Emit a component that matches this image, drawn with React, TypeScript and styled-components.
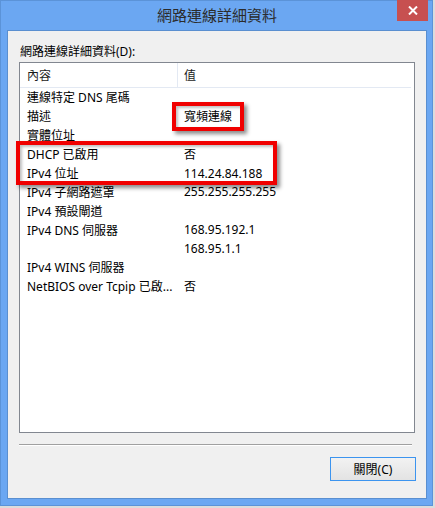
import React from "react";
import styled, { createGlobalStyle } from "styled-components";

const Global = createGlobalStyle`
  html, body { margin: 0; padding: 0; background: #dcdcdc; }
  body { font-family: "Noto Sans", "Noto Sans CJK TC", sans-serif; }
  * { box-sizing: border-box; }
`;

const Window = styled.div`
  position: relative;
  width: 433px;
  height: 506px;
  background: #6ba7f2;
  border: 1px solid #5b93d8;
  display: flex;
  flex-direction: column;
  padding: 0 5px 6px 6px;
`;

const TitleBar = styled.div`
  height: 29px;
  display: flex;
  align-items: center;
  justify-content: center;
  position: relative;
`;

const Title = styled.div`
  font-family: "Noto Sans CJK TC", sans-serif;
  font-size: 15px;
  color: #2b2b2b;
  margin-top: -2px;
`;

const CloseBtn = styled.div`
  position: absolute;
  right: -1px;
  top: -1px;
  width: 31px;
  height: 21px;
  background: #c75050;
  color: #fff;
  display: flex;
  align-items: center;
  justify-content: center;
`;

const Client = styled.div`
  flex: 1;
  background: #f0f0f0;
  border: 1px solid #5a8fd0;
  display: flex;
  flex-direction: column;
  padding: 0 12px 0 11px;
`;

const Label = styled.div`
  font-family: "Noto Sans", "Noto Sans CJK TC", sans-serif;
  font-size: 12px;
  color: #000;
  margin: 10px 0 0 1px;
  height: 21px;
  line-height: 21px;
`;

const ListBox = styled.div`
  height: 371px;
  width: 396px;
  background: #fff;
  border: 1px solid #828790;
  display: flex;
  flex-direction: column;
`;

const HeaderRow = styled.div`
  height: 25px;
  display: grid;
  grid-template-columns: 157px 1fr;
  border-bottom: 1px solid #e3e9f3;
  margin-right: 3px;
`;

const HeaderCell = styled.div<{ $divider?: boolean }>`
  font-size: 12px;
  color: #1a1a1a;
  padding-left: ${(p) => (p.$divider ? "6px" : "7px")};
  display: flex;
  align-items: center;
  border-left: ${(p) => (p.$divider ? "1px solid #e3e9f3" : "none")};
`;

const Body = styled.div`
  display: flex;
  flex-direction: column;
`;

const Row = styled.div`
  height: 18.9px;
  display: grid;
  grid-template-columns: 157px 1fr;
  align-items: center;
  font-size: 12px;
  color: #000;
`;

const Cell = styled.div`
  padding-left: 7px;
  white-space: nowrap;
  overflow: hidden;
`;

const Separator = styled.div`
  margin-top: 11px;
  width: 393px;
  height: 2px;
  border-top: 1px solid #a0a0a0;
  border-bottom: 1px solid #ffffff;
`;

const Footer = styled.div`
  display: flex;
  justify-content: flex-end;
  margin-top: 11px;
`;

const Button = styled.button`
  width: 86px;
  height: 24px;
  font-family: "Noto Sans", "Noto Sans CJK TC", sans-serif;
  font-size: 12px;
  color: #000;
  background: linear-gradient(#f2f2f2, #e3e3e3);
  border: 1px solid #3c94ef;
  padding: 0;
  margin-right: -2px;
`;

const Highlight = styled.div<{ $l: number; $t: number; $w: number; $h: number }>`
  position: absolute;
  left: ${(p) => p.$l}px;
  top: ${(p) => p.$t}px;
  width: ${(p) => p.$w}px;
  height: ${(p) => p.$h}px;
  border: 4px solid #f00000;
  box-shadow: 3px 3px 4px rgba(0, 0, 0, 0.45), inset 2px 2px 3px rgba(0, 0, 0, 0.25);
`;

const rows: [string, string][] = [
  ["連線特定 DNS 尾碼", ""],
  ["描述", "寬頻連線"],
  ["實體位址", ""],
  ["DHCP 已啟用", "否"],
  ["IPv4 位址", "114.24.84.188"],
  ["IPv4 子網路遮罩", "255.255.255.255"],
  ["IPv4 預設閘道", ""],
  ["IPv4 DNS 伺服器", "168.95.192.1"],
  ["", "168.95.1.1"],
  ["IPv4 WINS 伺服器", ""],
  ["NetBIOS over Tcpip 已啟...", "否"],
];

export default function App() {
  return (
    <>
      <Global />
      <Window>
        <TitleBar>
          <Title>網路連線詳細資料</Title>
          <CloseBtn>
            <svg width="10" height="9" viewBox="0 0 10 9">
              <path d="M1 0.5 L9 8.5 M9 0.5 L1 8.5" stroke="#fff" strokeWidth="2" />
            </svg>
          </CloseBtn>
        </TitleBar>
        <Client>
          <Label>網路連線詳細資料(D):</Label>
          <ListBox>
            <HeaderRow>
              <HeaderCell>內容</HeaderCell>
              <HeaderCell $divider>值</HeaderCell>
            </HeaderRow>
            <Body>
              {rows.map(([k, v], i) => (
                <Row key={i}>
                  <Cell>{k}</Cell>
                  <Cell>{v}</Cell>
                </Row>
              ))}
            </Body>
          </ListBox>
          <Separator />
          <Footer>
            <Button>關閉(C)</Button>
          </Footer>
        </Client>
        <Highlight $l={171} $t={101} $w={72} $h={29} />
        <Highlight $l={15} $t={140} $w={261} $h={44} />
      </Window>
    </>
  );
}
